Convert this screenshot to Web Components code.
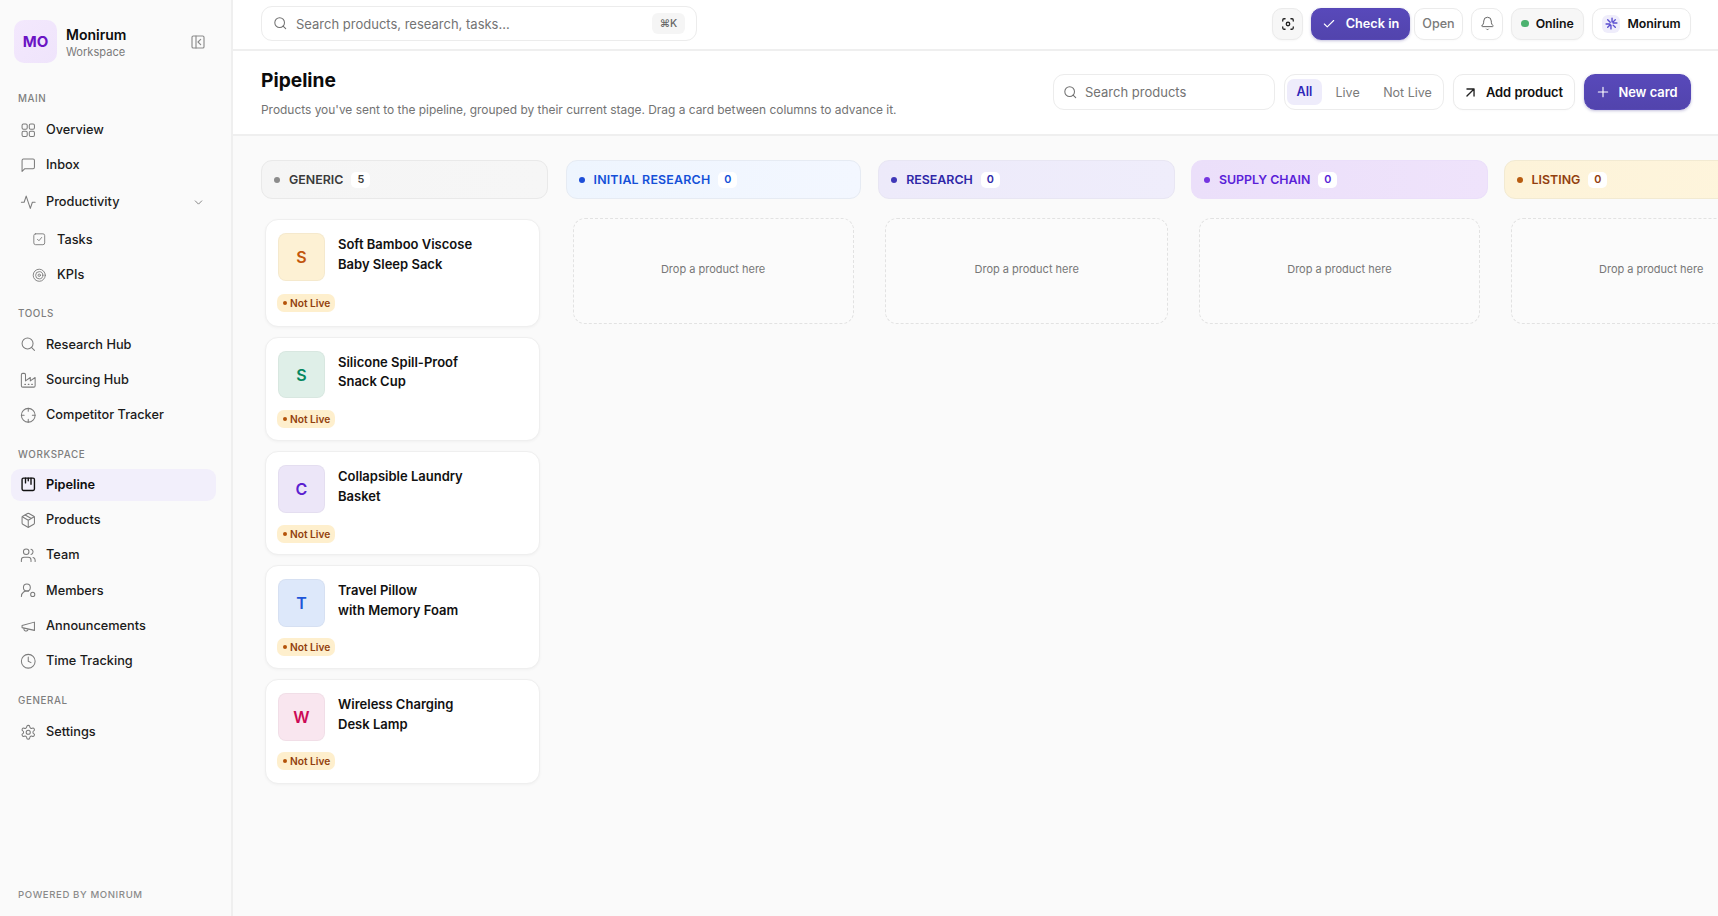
<!DOCTYPE html>
<html lang="en"><head><meta charset="utf-8"><title>Pipeline</title>
<style>
html,body{margin:0;height:100%;overflow:hidden;background:#fff}
body{font-family:Inter,"Liberation Sans",sans-serif;color:#111;-webkit-font-smoothing:antialiased}
</style></head><body>
<app-shell>
  <side-bar slot="side">
    <nav-label style="--top:29px">MAIN</nav-label>
    <nav-item icon="grid" style="margin-top:1px">Overview</nav-item>
    <nav-item icon="msg">Inbox</nav-item>
    <nav-item icon="activity" chevron style="margin-top:1.4px">Productivity</nav-item>
    <nav-item icon="tasks" sub style="margin-top:2.3px">Tasks</nav-item>
    <nav-item icon="target" sub>KPIs</nav-item>
    <nav-label>TOOLS</nav-label>
    <nav-item icon="search">Research Hub</nav-item>
    <nav-item icon="factory">Sourcing Hub</nav-item>
    <nav-item icon="crosshair">Competitor Tracker</nav-item>
    <nav-label>WORKSPACE</nav-label>
    <nav-item icon="kanban" active>Pipeline</nav-item>
    <nav-item icon="box">Products</nav-item>
    <nav-item icon="users">Team</nav-item>
    <nav-item icon="member">Members</nav-item>
    <nav-item icon="mega">Announcements</nav-item>
    <nav-item icon="clock">Time Tracking</nav-item>
    <nav-label>GENERAL</nav-label>
    <nav-item icon="gear" style="margin-top:1px">Settings</nav-item>
  </side-bar>
  <top-bar slot="top"></top-bar>
  <page-header slot="head"></page-header>
  <kanban-board slot="board">
    <kanban-col name="GENERIC" count="5" tone="generic" style="width:287px" kind="cards">
      <product-card letter="S" tone="amber" h="107.5" gap="13">Soft Bamboo Viscose<br>Baby Sleep Sack</product-card>
      <product-card letter="S" tone="green" h="104.5" gap="12">Silicone Spill-Proof<br>Snack Cup</product-card>
      <product-card letter="C" tone="violet" h="104" gap="12">Collapsible Laundry<br>Basket</product-card>
      <product-card letter="T" tone="blue" h="104" gap="11">Travel Pillow<br>with Memory Foam</product-card>
      <product-card letter="W" tone="pink" h="104.5" gap="11">Wireless Charging<br>Desk Lamp</product-card>
    </kanban-col>
    <kanban-col name="INITIAL RESEARCH" count="0" tone="blue" style="--ls:.2px"><drop-zone></drop-zone></kanban-col>
    <kanban-col name="RESEARCH" count="0" tone="indigo" style="width:297px;margin-right:-1.8px;--dp:7px 8px"><drop-zone></drop-zone></kanban-col>
    <kanban-col name="SUPPLY CHAIN" count="0" tone="purple" style="width:297px;margin-right:-1.8px;--dp:8px 8px"><drop-zone></drop-zone></kanban-col>
    <kanban-col name="LISTING" count="0" tone="amber"><drop-zone></drop-zone></kanban-col>
  </kanban-board>
</app-shell>
<script>
const ICONS={
 grid:'<rect x="3" y="3" width="7.5" height="7.5" rx="2"/><rect x="13.5" y="3" width="7.5" height="7.5" rx="2"/><rect x="3" y="13.5" width="7.5" height="7.5" rx="2"/><rect x="13.5" y="13.5" width="7.5" height="7.5" rx="2"/>',
 msg:'<path d="M21 15a2 2 0 0 1-2 2H7l-4 4V5a2 2 0 0 1 2-2h14a2 2 0 0 1 2 2z"/>',
 activity:'<path d="M22 12h-4l-3 9L9 3l-3 9H2"/>',
 tasks:'<rect x="3" y="3" width="18" height="18" rx="3"/><path d="m9 12 2.5 2.5L16 9"/>',
 target:'<circle cx="12" cy="12" r="10"/><circle cx="12" cy="12" r="6"/><circle cx="12" cy="12" r="2"/>',
 search:'<circle cx="11" cy="11" r="8"/><path d="m21 21-4.3-4.3"/>',
 factory:'<path d="M2 20a2 2 0 0 0 2 2h16a2 2 0 0 0 2-2V8l-7 5V8l-7 5V4a2 2 0 0 0-2-2H4a2 2 0 0 0-2 2Z"/><path d="M17 18h1M12 18h1M7 18h1"/>',
 crosshair:'<circle cx="12" cy="12" r="10"/><path d="M22 12h-4M6 12H2M12 6V2M12 22v-4"/>',
 kanban:'<rect x="3" y="3" width="18" height="18" rx="2"/><path d="M8 3v7M12 3v4M16 3v9"/>',
 box:'<path d="M21 8a2 2 0 0 0-1-1.73l-7-4a2 2 0 0 0-2 0l-7 4A2 2 0 0 0 3 8v8a2 2 0 0 0 1 1.73l7 4a2 2 0 0 0 2 0l7-4A2 2 0 0 0 21 16Z"/><path d="m3.3 7 8.7 5 8.7-5M12 22V12M7.5 4.27l9 5.15"/>',
 users:'<path d="M16 21v-2a4 4 0 0 0-4-4H6a4 4 0 0 0-4 4v2"/><circle cx="9" cy="7" r="4"/><path d="M22 21v-2a4 4 0 0 0-3-3.87M16 3.13a4 4 0 0 1 0 7.75"/>',
 member:'<path d="M2 21a8 8 0 0 1 10.43-7.62"/><circle cx="10" cy="8" r="5"/><circle cx="18.5" cy="18" r="3"/>',
 mega:'<path d="m3 11 18-5v12L3 14v-3z"/><path d="M11.6 16.8a3 3 0 1 1-5.8-1.6"/>',
 clock:'<circle cx="12" cy="12" r="10"/><path d="M12 6v6l4 2"/>',
 gear:'<path d="M12.22 2h-.44a2 2 0 0 0-2 2v.18a2 2 0 0 1-1 1.73l-.43.25a2 2 0 0 1-2 0l-.15-.08a2 2 0 0 0-2.73.73l-.22.38a2 2 0 0 0 .73 2.73l.15.1a2 2 0 0 1 1 1.72v.51a2 2 0 0 1-1 1.74l-.15.09a2 2 0 0 0-.73 2.73l.22.38a2 2 0 0 0 2.73.73l.15-.08a2 2 0 0 1 2 0l.43.25a2 2 0 0 1 1 1.73V20a2 2 0 0 0 2 2h.44a2 2 0 0 0 2-2v-.18a2 2 0 0 1 1-1.73l.43-.25a2 2 0 0 1 2 0l.15.08a2 2 0 0 0 2.73-.73l.22-.39a2 2 0 0 0-.73-2.73l-.15-.08a2 2 0 0 1-1-1.74v-.5a2 2 0 0 1 1-1.74l.15-.09a2 2 0 0 0 .73-2.73l-.22-.38a2 2 0 0 0-2.73-.73l-.15.08a2 2 0 0 1-2 0l-.43-.25a2 2 0 0 1-1-1.73V4a2 2 0 0 0-2-2z"/><circle cx="12" cy="12" r="3"/>',
 chevron:'<path d="m6 9 6 6 6-6"/>',
 collapse:'<rect x="3" y="3" width="18" height="18" rx="2"/><path d="M9 3v18M16 8l-4 4 4 4"/>',
 scan:'<path d="M3 7V5a2 2 0 0 1 2-2h2M17 3h2a2 2 0 0 1 2 2v2M21 17v2a2 2 0 0 1-2 2h-2M7 21H5a2 2 0 0 1-2-2v-2"/><circle cx="12" cy="12" r="3"/>',
 check:'<path d="M20 6 9 17l-5-5"/>',
 bell:'<path d="M10.27 21a2 2 0 0 0 3.46 0"/><path d="M3.26 15.33A1 1 0 0 0 4 17h16a1 1 0 0 0 .74-1.67C19.41 13.96 18 12.5 18 8A6 6 0 0 0 6 8c0 4.5-1.41 5.96-2.74 7.33"/>',
 burst:'<path d="M13 2v7M11 15v7M5 5l4.6 4.6M15 15l4 4M2 13h7M15 11h7M5 19l4.6-4.6M15 9l4-4"/>',
 arrow:'<path d="M7 7h10v10M7 17 17 7"/>',
 plus:'<path d="M5 12h14M12 5v14"/>'
};
const svg=(n,s,w=2,c='currentColor',x='')=>`<svg width="${s}" height="${s}" viewBox="0 0 24 24" fill="none" stroke="${c}" stroke-width="${w}" stroke-linecap="round" stroke-linejoin="round" style="display:block;flex:none;${x}">${ICONS[n]}</svg>`;
class Base extends HTMLElement{
 constructor(){super();this.attachShadow({mode:'open'})}
 connectedCallback(){this.shadowRoot.innerHTML=this.render()}
 a(n,d=''){return this.getAttribute(n)??d}
}
const def=(n,r)=>customElements.define(n,class extends Base{render(){return r.call(this)}});

def('app-shell',function(){return `<style>
:host{display:grid;grid-template-columns:233px 1fr;grid-template-rows:51px 85px 1fr;height:916px;width:1718px;overflow:hidden}
.s{grid-row:1/4;grid-column:1;display:block;min-height:0}
</style><slot name="side" class="s"></slot><slot name="top"></slot><slot name="head"></slot><slot name="board"></slot>`});

def('side-bar',function(){return `<style>
:host{display:flex;flex-direction:column;height:916px;box-sizing:border-box;background:#fafafa;border-right:2px solid #efefef;padding:20px 15px 0 11px}
.brand{display:flex;align-items:center;height:43px;padding-left:3px}
.logo{width:43px;height:43px;border-radius:10px;background:linear-gradient(135deg,#f3e8fd,#efe4fb);color:#6b14c4;font:700 15px/43px Inter,sans-serif;text-align:center;flex:none}
.bt{margin:2px 0 0 9px;flex:1}
.n{font:600 14px/17px Inter,sans-serif;color:#0d0d0d}
.w{font:400 11.1px/15px Inter,sans-serif;color:#7a7a7a;margin-top:2px}
.col{color:#8a8a8a;margin-right:10px}
.foot{margin-top:auto;margin-bottom:15px;padding-left:7px;font:500 9.6px/13px Inter,sans-serif;letter-spacing:.6px;color:#8a8a8a}
</style>
<div class="brand"><div class="logo">MO</div><div class="bt"><div class="n">Monirum</div><div class="w">Workspace</div></div><div class="col">${svg('collapse',16,1.7)}</div></div>
<slot></slot>
<div class="foot">POWERED BY MONIRUM</div>`});

def('nav-label',function(){return `<style>
:host{display:block;padding-left:7px;margin:var(--top,13.2px) 0 8.1px;font:500 9.8px/13px Inter,sans-serif;letter-spacing:.6px;color:#7e7e7e}
</style><slot></slot>`});

def('nav-item',function(){
 const sub=this.hasAttribute('sub'),act=this.hasAttribute('active');
 return `<style>
:host{display:flex;align-items:center;height:32px;margin-bottom:3.3px;box-sizing:border-box;padding-left:${sub?'21':'8.5'}px;border-radius:9px;font:${act?600:450} 12.75px/32px Inter,sans-serif;color:${act?'#0d0d0d':'#1b1b1b'};background:${act?'#f2effb':'transparent'}}
.i{color:${act?'#111':'#7b7b7b'};margin-right:${sub?'10.5':'10'}px}
.c{margin-left:auto;margin-right:11px;color:#7b7b7b}
</style><span class="i">${svg(this.a('icon'),sub?14.5:16.5,act?2:1.5)}</span><slot></slot>${this.hasAttribute('chevron')?`<span class="c">${svg('chevron',13,1.7)}</span>`:''}`});

def('text-search',function(){return `<style>
:host{display:flex;align-items:center;box-sizing:border-box;background:#fff;border:1.5px solid #ececec;border-radius:11px;padding:0 11px 0 ${this.a('pad','10.5')}px;font:400 13px Inter,sans-serif;color:#737373}
.i{margin-right:${this.a('mr','9')}px;color:#6f6f6f}
kbd{margin-left:auto;width:33px;height:21px;border-radius:6px;background:#f5f5f5;color:#666;font:500 10.5px/21px Inter,sans-serif;text-align:center}
</style><span class="i">${svg('search',14.5,1.7)}</span><slot></slot>${this.a('kbd')?`<kbd>${this.a('kbd')}</kbd>`:''}`});

def('bar-btn',function(){const k=this.a('kind');return `<style>
:host{display:flex;align-items:center;justify-content:center;box-sizing:border-box;height:var(--h,32px);border-radius:10px;white-space:nowrap;font:600 12.3px Inter,sans-serif;gap:var(--g,9px);
${k==='primary'?'background:linear-gradient(#5849ba,#5244ad);color:#fff;border:1px solid #5648b6;box-shadow:0 1px 3px rgba(60,50,140,.3)':k==='soft'?'background:#f7f7f7;border:1.5px solid #ebebeb;color:#111;box-shadow:0 1px 2px rgba(0,0,0,.03)':'background:#fff;border:1.5px solid #ebebeb;color:#111;box-shadow:0 1px 2px rgba(0,0,0,.02)'}}
</style><slot></slot>`});

def('top-bar',function(){return `<style>
:host{display:flex;align-items:center;box-sizing:border-box;height:51px;background:#fff;border-bottom:2px solid #efefef;padding:0 27px 2px 28px}
text-search{width:436px;height:35px}
.r{margin-left:auto;display:flex;align-items:center;gap:8px}
.d{width:7.5px;height:7.5px;border-radius:50%;background:#4cb26f}
.a{width:18px;height:18px;border-radius:6px;background:#efedfb;display:flex;align-items:center;justify-content:center;flex:none}
</style><text-search kbd="⌘K">Search products, research, tasks...</text-search>
<div class="r">
<bar-btn kind="soft" style="width:31px">${svg('scan',14,2.2,'#222')}</bar-btn>
<bar-btn kind="primary" style="width:99px;font-size:12.7px;--g:10px">${svg('check',14,1.9)}<span>Check in</span></bar-btn>
<bar-btn style="width:49px;margin-left:-4px;color:#7a7a7a;font-weight:500;font-size:12.6px">Open</bar-btn>
<bar-btn style="width:32px">${svg('bell',15,1.6,'#666')}</bar-btn>
<bar-btn kind="soft" style="width:73px;--g:7px"><span class="d"></span><span>Online</span></bar-btn>
<bar-btn style="width:99px;--g:7px"><span class="a">${svg('burst',13,2.6,'#5b4fd0')}</span><span>Monirum</span></bar-btn>
</div>`});

def('page-header',function(){return `<style>
:host{display:flex;align-items:flex-start;box-sizing:border-box;height:85px;background:#fff;border-bottom:2px solid #efefef;padding:23px 27px 0 28px}
.t{flex:1;min-width:0}
h1{margin:-8px 0 0;font:700 19.2px/28px Inter,sans-serif;color:#0b0b0b}
p{margin:6.5px 0 0;font:400 11.93px/18px Inter,sans-serif;color:#737373;white-space:nowrap}
.r{display:flex;align-items:center;gap:9px}
text-search{width:222px;height:36px}
.tabs{display:flex;align-items:center;box-sizing:border-box;width:160px;height:36px;border:1.5px solid #ececec;border-radius:11px;padding:0 2px;font:400 12.5px Inter,sans-serif;color:#7a7a7a;background:#fff}
.tabs b{width:35px;height:26px;border-radius:7px;background:#eeecfb;color:#2f27b8;font:600 12.6px/26px Inter,sans-serif;text-align:center}
.l{margin-left:13.5px}.nl{margin-left:23.5px}
</style><div class="t"><h1>Pipeline</h1><p>Products you've sent to the pipeline, grouped by their current stage. Drag a card between columns to advance it.</p></div>
<div class="r"><text-search pad="8.5" mr="8">Search products</text-search>
<div class="tabs"><b>All</b><span class="l">Live</span><span class="nl">Not Live</span></div>
<bar-btn style="--h:36px;width:122px;font-size:12.9px;--g:10px">${svg('arrow',17,1.9,'#222','margin:0 -3px')}<span>Add product</span></bar-btn>
<bar-btn kind="primary" style="--h:36px;width:107px;font-size:12.9px;--g:9px;border-radius:11px">${svg('plus',16,1.7,'currentColor','margin:0 -2px')}<span>New card</span></bar-btn>
</div>`});

def('kanban-board',function(){return `<style>
:host{display:flex;align-items:flex-start;gap:17.5px;box-sizing:border-box;background:#fafafa;padding:24px 0 0 28px;overflow:hidden;min-width:0;height:780px}
</style><slot></slot>`});

const COL={generic:['#f5f5f5','#f6f6f6','#3a3a3a','#8c8c8c','#e9e9e9'],blue:['#eef5fe','#f3f7ff','#1450d8','#1d4ed8','#e6ebf3'],indigo:['#edeafa','#efedfb','#2f27a8','#4038b8','#e8e6f3'],purple:['#ebdffa','#efe3fb','#5a1fd8','#7535e0','#ebdffa'],amber:['#fdf3d9','#fef5dd','#92400e','#b85c10','#f2ead2']};
def('kanban-col',function(){const c=COL[this.a('tone')],cards=this.a('kind')==='cards';return `<style>
:host{display:flex;flex-direction:column;flex:none;width:295.2px;box-sizing:border-box}
.h{display:flex;align-items:center;box-sizing:border-box;height:39px;border-radius:11px;border:1.5px solid ${c[4]};background:linear-gradient(90deg,${c[0]},${c[1]});padding-left:12px;color:${c[2]};font:600 12.4px Inter,sans-serif;letter-spacing:var(--ls,0)}
.d{width:6px;height:6px;border-radius:50%;background:${c[3]};margin-right:9px;flex:none}
.c{margin-left:8px;min-width:19px;height:16px;border-radius:5px;background:#fff;font:600 10.8px/16px Inter,sans-serif;text-align:center}
.b{display:flex;flex-direction:column;gap:10px;padding:${cards?'20px 8px 0 4px':'19px var(--dp,7px 7px)'};padding-top:${cards?20:19}px;padding-bottom:0}
</style><div class="h"><span class="d"></span><span>${this.a('name')}</span><span class="c">${this.a('count')}</span></div><div class="b"><slot></slot></div>`});

const AV={amber:['#fdf1d4','#c2560c'],green:['#dfefe8','#05875f'],violet:['#ece6f8','#5b1fd0'],blue:['#dde8fa','#1d55d8'],pink:['#f9e6ef','#cc0a55']};
def('product-card',function(){const t=AV[this.a('tone')];return `<style>
:host{display:flex;flex-direction:column;box-sizing:border-box;height:${this.a('h')}px;background:#fff;border:1.5px solid #efefef;border-radius:13px;padding:13px 12px 0 12px;box-shadow:0 1px 3px rgba(0,0,0,.04)}
.top{display:flex}
.av{width:47px;height:47.5px;border-radius:8px;background:${t[0]};border:1px solid rgba(0,0,0,.03);box-sizing:border-box;color:${t[1]};font:600 16px/46px Inter,sans-serif;text-align:center;flex:none}
.x{margin:2px 0 0 13px;font:600 13px/19.5px Inter,sans-serif;color:#111}
status-pill{margin-top:${this.a('gap')}px;margin-left:-1px}
</style><div class="top"><div class="av">${this.a('letter')}</div><div class="x"><slot></slot></div></div><status-pill>Not Live</status-pill>`});

def('status-pill',function(){return `<style>
:host{display:flex;align-items:center;align-self:flex-start;box-sizing:border-box;height:18px;width:58px;border-radius:7px;background:#feefcd;color:#92400e;font:600 10.2px Inter,sans-serif;padding-left:5.5px}
i{width:4px;height:4px;border-radius:50%;background:#b45309;margin-right:3.5px}
</style><i></i><slot></slot>`});

def('drop-zone',function(){return `<style>
:host{display:flex;align-items:center;justify-content:center;box-sizing:border-box;height:106px;padding-bottom:4px;border:1px dashed #e2e2e2;border-radius:12px;background:#fbfbfb;color:#777;font:400 11px Inter,sans-serif}
</style>Drop a product here`});
</script>
</body></html>
